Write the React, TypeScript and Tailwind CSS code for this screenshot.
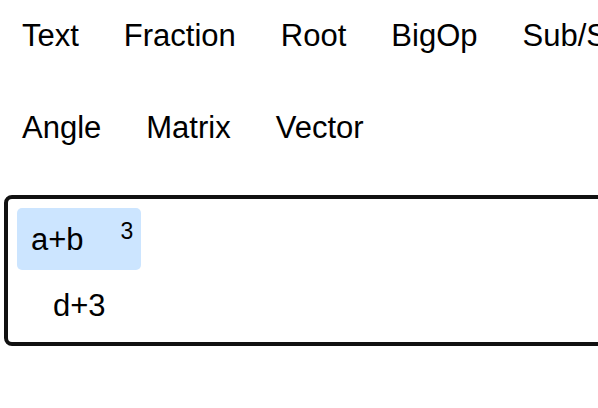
const rows: string[][] = [
  ["Text", "Fraction", "Root", "BigOp", "Sub/Sup"],
  ["Angle", "Matrix", "Vector"],
];

export default function App() {
  return (
    <main className="overflow-hidden bg-white font-['Liberation_Sans',Arial,sans-serif] text-[31px] leading-9 text-black">
      <nav aria-label="Math tools" className="flex flex-col gap-14 pt-[18px] pl-[22px]">
        {rows.map((row) => (
          <div key={row[0]} className="flex gap-[45px]">
            {row.map((label) => (
              <button key={label} type="button" className="shrink-0 whitespace-nowrap">
                {label}
              </button>
            ))}
          </div>
        ))}
      </nav>
      <section aria-label="Formula editor" className="mt-[49px] -mr-4 ml-1 rounded-lg border-4 border-[#111] px-[9px] pt-[9px] pb-[18px]">
        <div className="flex w-fit items-start rounded-[5px] bg-[#cce5ff] pt-[14px] pr-2 pb-3 pl-[14px]">
          <span>a+b</span>
          <sup className="top-0 ml-[37px] text-[23px] leading-[18px]">3</sup>
        </div>
        <div className="mt-[18px] pl-9">d+3</div>
      </section>
    </main>
  );
}
